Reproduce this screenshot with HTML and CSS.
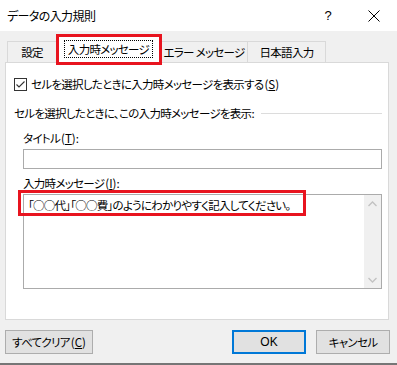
FILE: index.html
```html
<!DOCTYPE html>
<html lang="ja">
<head>
<meta charset="utf-8">
<link rel="stylesheet" href="styles.css">
</head>
<body>
<div class="dialog">
  <div class="titlebar">
    <span class="title">データの入力規則</span>
    <span class="cap help">?</span>
    <span class="cap close"><svg width="12" height="12" viewBox="0 0 12 12"><path d="M0.5 0.5L11.5 11.5M11.5 0.5L0.5 11.5" stroke="#000" stroke-width="1" fill="none"/></svg></span>
  </div>
  <div class="tabs">
    <div class="tab t1">設定</div>
    <div class="tab active"><span class="focus">入力時メッセージ</span></div>
    <div class="tab t3">エラー メッセージ</div>
    <div class="tab t4">日本語入力</div>
  </div>
  <div class="panel">
    <div class="check">
      <svg class="box" width="13" height="13" viewBox="0 0 13 13"><rect x="0.5" y="0.5" width="12" height="12" fill="#fff" stroke="#333"/><path d="M2.5 6.5L5 9L10.5 3.5" stroke="#333" stroke-width="1.1" fill="none"/></svg>
      <span>セルを選択したときに入力時メッセージを表示する<span class="lat">(<u>S</u>)</span></span>
    </div>
    <div class="group">
      <span>セルを選択したときに、この入力時メッセージを表示:</span>
      <span class="rule"></span>
    </div>
    <div class="label">タイトル<span class="lat">(<u>T</u>):</span></div>
    <div class="input"></div>
    <div class="label">入力時メッセージ<span class="lat">(<u>I</u>):</span></div>
    <div class="textarea">
      <div class="msg">「○○代」「○○費」のようにわかりやすく記入してください。</div>
      <div class="scroll">
        <div class="sbtn"><svg width="9" height="6" viewBox="0 0 9 6"><path d="M0.5 5L4.5 1L8.5 5" stroke="#c2c2c2" stroke-width="1.3" fill="none"/></svg></div>
        <div class="sbtn"><svg width="9" height="6" viewBox="0 0 9 6"><path d="M0.5 1L4.5 5L8.5 1" stroke="#c2c2c2" stroke-width="1.3" fill="none"/></svg></div>
      </div>
    </div>
  </div>
  <div class="buttons">
    <div class="btn clear">すべてクリア<span class="lat">(<u>C</u>)</span></div>
    <div class="spacer"></div>
    <div class="btn ok">OK</div>
    <div class="btn cancel">キャンセル</div>
  </div>
  <div class="frame-bottom"></div>
  <div class="mark mark-tab"></div>
  <div class="mark mark-msg"></div>
</div>
</body>
</html>
```
FILE: styles.css
```css
html, body {
  margin: 0;
  padding: 0;
}
body {
  width: 397px;
  height: 365px;
  overflow: hidden;
  background: #f0f0f0;
  font-family: "Noto Sans CJK JP", "Noto Sans", sans-serif;
  font-size: 11.5px;
  letter-spacing: -0.7px;
  color: #000;
  font-feature-settings: "palt";
}
.lat {
  letter-spacing: 0;
  margin-left: 1px;
}
.dialog {
  position: relative;
  width: 397px;
  height: 365px;
}
.titlebar {
  height: 31px;
  background: #fff;
  display: flex;
  align-items: center;
  padding-left: 7px;
}
.title {
  flex: 1;
  line-height: 16px;
  font-size: 12px;
  letter-spacing: -0.6px;
}
.cap {
  width: 46px;
  height: 31px;
  display: flex;
  align-items: center;
  justify-content: center;
}
.help {
  font-family: "Liberation Sans", sans-serif;
  font-size: 13px;
  letter-spacing: 0;
}
.tabs {
  display: flex;
  align-items: flex-end;
  height: 26px;
  margin-top: 5px;
  padding-left: 7px;
  position: relative;
  z-index: 1;
}
.tab {
  box-sizing: border-box;
  height: 21px;
  border: 1px solid #d9d9d9;
  border-bottom: none;
  background: #f0f0f0;
  display: flex;
  align-items: center;
  justify-content: center;
  line-height: 16px;
  white-space: nowrap;
}
.t1 { width: 50px; }
.active {
  width: 105px;
  height: 27px;
  margin-bottom: -1px;
  margin-left: -1px;
  background: #fff;
  padding-bottom: 2px;
}
.t3 { width: 88px; margin-left: -1px; }
.t4 { width: 79px; margin-left: -1px; }
.focus {
  border: 1px dotted #000;
  padding: 0 3px;
  height: 16px;
  display: flex;
  align-items: center;
}
.panel {
  box-sizing: border-box;
  height: 258px;
  margin: 0 8px 0 5px;
  border: 1px solid #d9d9d9;
  background: #fff;
  padding-top: 13px;
}
.check {
  display: flex;
  align-items: center;
  height: 16px;
  margin-left: 8px;
  line-height: 16px;
  white-space: nowrap;
}
.box {
  margin-right: 4px;
  flex: none;
}
.group {
  display: flex;
  align-items: center;
  height: 16px;
  margin: 13px 6px 0 8px;
  line-height: 16px;
  white-space: nowrap;
}
.rule {
  flex: 1;
  height: 1px;
  background: #dcdcdc;
  margin-left: 7px;
}
.label {
  height: 16px;
  line-height: 16px;
  margin: 9px 0 0 17px;
}
.input {
  box-sizing: border-box;
  height: 20px;
  margin: 3px 6px 0 17px;
  border: 1px solid #ababab;
}
.input + .label { margin-top: 6px; }
.textarea {
  box-sizing: border-box;
  height: 95px;
  margin: 3px 6px 0 17px;
  border: 1px solid #ababab;
  display: flex;
}
.msg {
  flex: 1;
  padding: 2px 0 0 4px;
  line-height: 16px;
  white-space: nowrap;
  letter-spacing: -0.75px;
}
.scroll {
  width: 17px;
  background: #f0f0f0;
  display: flex;
  flex-direction: column;
  justify-content: space-between;
}
.sbtn {
  height: 17px;
  display: flex;
  align-items: center;
  justify-content: center;
}
.buttons {
  display: flex;
  margin-top: 10px;
  padding: 0 7px 0 5px;
  height: 24px;
  gap: 10px;
}
.spacer { flex: 1; }
.btn {
  box-sizing: border-box;
  height: 24px;
  border: 1px solid #adadad;
  background: #e1e1e1;
  display: flex;
  align-items: center;
  justify-content: center;
  line-height: 16px;
  white-space: nowrap;
}
.clear { width: 88px; }
.ok {
  width: 74px;
  border: 2px solid #0078d7;
  font-family: "Liberation Sans", sans-serif;
  font-size: 12px;
  letter-spacing: 0;
}
.cancel { width: 74px; }
.frame-bottom {
  margin-top: 9px;
  height: 2px;
  background: #767676;
}
.mark {
  position: absolute;
  box-sizing: border-box;
  border: 3px solid #e8141f;
  z-index: 5;
}
.mark-tab {
  left: 56px;
  top: 34px;
  width: 106px;
  height: 31px;
}
.mark-msg {
  left: 18px;
  top: 190px;
  width: 288px;
  height: 26px;
}
```
